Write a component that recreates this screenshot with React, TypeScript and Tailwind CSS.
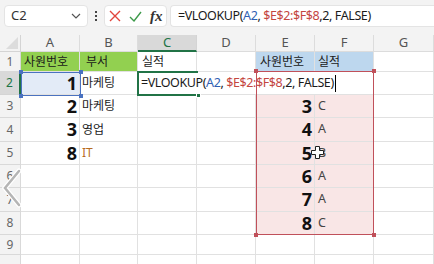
import type { ReactNode } from 'react';

const COLS = ['A', 'B', 'C', 'D', 'E', 'F', 'G'];
const ROWS = [1, 2, 3, 4, 5, 6, 7, 8, 9, 10];

// lookup table E/F
const LOOKUP: Record<number, [string, string]> = {
  3: ['3', 'C'],
  4: ['4', 'A'],
  5: ['5', 'B'],
  6: ['6', 'A'],
  7: ['7', 'A'],
  8: ['8', 'C'],
};

const EMP: Record<number, [string, string]> = {
  2: ['1', '마케팅'],
  3: ['2', '마케팅'],
  4: ['3', '영업'],
  5: ['8', 'IT'],
};

function Formula() {
  return (
    <span className="whitespace-pre text-[12.5px] tracking-[-0.4px]">
      =VLOOKUP(<span className="text-[#2f5fb3]">A2</span>, <span className="text-[#c4463f]">$E$2:$F$8</span>,2, FALSE)
    </span>
  );
}

function Cell({ children, className = '' }: { children?: ReactNode; className?: string }) {
  return (
    <div className={`flex items-center overflow-hidden whitespace-nowrap border-r border-b border-[#e1e1e1] ${className}`}>
      {children}
    </div>
  );
}

function renderRow(r: number) {
  const cells: ReactNode[] = [];
  const active = r === 2;
  cells.push(
    <div
      key={`h${r}`}
      className={`flex items-center justify-center border-b border-r text-[12px] ${
        active
          ? 'border-r-2 border-r-[#217346] border-b-[#d4d4d4] bg-[#d9d9d9] text-[#217346]'
          : 'border-[#d9d9d9] bg-[#f3f3f3] text-[#666]'
      }`}
    >
      {r < 10 ? r : ''}
    </div>
  );

  if (r === 1) {
    cells.push(
      <Cell key="A1" className="bg-[#92d050] pl-[3px] text-[12px] text-[#1a1a1a]">사원번호</Cell>,
      <Cell key="B1" className="bg-[#92d050] pl-[6px] text-[12px] text-[#1a1a1a]">부서</Cell>,
      <Cell key="C1" className="pl-[4px] text-[12px] text-[#1a1a1a]">실적</Cell>,
      <Cell key="D1" />,
      <Cell key="E1" className="bg-[#bdd7ee] pl-[4px] text-[12px] text-[#1a1a1a]">사원번호</Cell>,
      <Cell key="F1" className="bg-[#bdd7ee] pl-[3px] text-[12px] text-[#1a1a1a]">실적</Cell>,
      <Cell key="G1" />
    );
    return cells;
  }

  const emp = EMP[r];
  cells.push(
    <Cell key={`A${r}`} className={`justify-end pr-[2px] text-[18px] font-bold text-[#111] ${r === 2 ? 'bg-[#e3ebf7]' : ''}`}>
      {emp?.[0]}
    </Cell>,
    <Cell key={`B${r}`} className={`pl-[2px] text-[12px] ${emp?.[1] === 'IT' ? 'text-[#b86b1e]' : 'text-[#222]'}`}>
      {emp?.[1]}
    </Cell>
  );

  if (r === 2) {
    cells.push(
      <div key="C2" className="col-span-4 flex items-center whitespace-nowrap border-b border-[#e1e1e1] bg-white pl-[3px] text-[#1a1a1a]">
        <Formula />
        <span className="ml-[1px] inline-block h-[17px] w-px bg-black" />
      </div>,
      <Cell key="G2" />
    );
    return cells;
  }

  const lk = LOOKUP[r];
  cells.push(
    <Cell key={`C${r}`} />,
    <Cell key={`D${r}`} />,
    <Cell key={`E${r}`} className={lk ? 'justify-end bg-[#f9e6e6] pr-[2px] text-[18px] font-bold text-[#111]' : ''}>
      {lk?.[0]}
    </Cell>,
    <Cell key={`F${r}`} className={lk ? 'bg-[#f9e6e6] pl-[3px] text-[12.5px] text-[#444]' : ''}>
      {lk?.[1]}
    </Cell>,
    <Cell key={`G${r}`} />
  );
  return cells;
}

export default function App() {
  return (
    <div className="relative h-[264px] w-[434px] overflow-hidden bg-white font-['Noto_Sans','Noto_Sans_CJK_KR',sans-serif]">
      {/* formula bar */}
      <div className="flex h-[35px] items-start bg-[#f3f3f3] pt-[5px]">
        <div className="ml-[4px] flex h-[22px] w-[84px] items-center justify-between rounded-[4px] border border-[#e4e4e4] bg-white pl-[6px] pr-[6px] text-[13px] text-[#333]">
          <span>C2</span>
          <svg width="10" height="6" viewBox="0 0 10 6">
            <path d="M1 1l4 4 4-4" fill="none" stroke="#555" strokeWidth="1.2" />
          </svg>
        </div>
        <div className="ml-[7px] mt-[6px] flex w-[3px] flex-col gap-[2px]">
          <span className="h-[2px] w-[2px] bg-[#444]" />
          <span className="h-[2px] w-[2px] bg-[#444]" />
          <span className="h-[2px] w-[2px] bg-[#444]" />
        </div>
        <div className="ml-[6px] flex h-[22px] w-[63px] items-center gap-[8px] rounded-[4px] border border-[#e4e4e4] bg-white pl-[4px]">
          <svg width="12" height="12" viewBox="0 0 12 12">
            <path d="M1 1l10 10M11 1L1 11" stroke="#e2453c" strokeWidth="1.4" />
          </svg>
          <svg width="13" height="11" viewBox="0 0 13 11">
            <path d="M1 6l4 4 7-9" fill="none" stroke="#3d9a4a" strokeWidth="1.4" />
          </svg>
          <span className="font-['Liberation_Serif',serif] text-[15px] font-bold italic leading-none text-[#333]">fx</span>
        </div>
        <div className="ml-[3px] flex h-[22px] flex-1 items-center rounded-l-[4px] border border-r-0 border-[#e4e4e4] bg-white pl-[7px] whitespace-nowrap text-[#1a1a1a]">
          <Formula />
        </div>
      </div>

      {/* sheet grid */}
      <div className="relative grid grid-cols-[21px_59px_58px_59px_59px_59px_59px_60px] grid-rows-[17px_20px_23px_23px_24px_23px_23px_24px_23px_20px_20px]">
        <div className="flex items-end justify-end border-r border-b border-[#d4d4d4] bg-[#f3f3f3] p-[2px]">
          <svg width="12" height="12" viewBox="0 0 12 12">
            <path d="M12 0v12H0z" fill="#dcdcdc" />
          </svg>
        </div>
        {COLS.map((c) => (
          <div
            key={c}
            className={`flex items-center justify-center border-r text-[13px] ${
              c === 'C'
                ? 'border-b-2 border-[#d4d4d4] border-b-[#217346] bg-[#d9d9d9] text-[#217346]'
                : 'border-b border-[#dcdcdc] bg-[#f3f3f3] text-[#555]'
            }`}
          >
            {c}
          </div>
        ))}
        {ROWS.map((r) => renderRow(r))}

        {/* A2 reference (blue) */}
        <div className="pointer-events-none absolute left-[21px] top-[37px] h-[24px] w-[60px] border-[1.5px] border-[#4a72c0]">
          <span className="absolute -left-[3px] -top-[3px] h-[4px] w-[4px] bg-[#4a72c0]" />
          <span className="absolute -right-[3px] -top-[3px] h-[4px] w-[4px] bg-[#4a72c0]" />
          <span className="absolute -left-[3px] -bottom-[3px] h-[4px] w-[4px] bg-[#4a72c0]" />
          <span className="absolute -right-[3px] -bottom-[3px] h-[4px] w-[4px] bg-[#4a72c0]" />
        </div>

        {/* active cell C2, edit text runs past its right edge */}
        <div className="pointer-events-none absolute left-[137px] top-[36px] h-[25px] w-[61px] border-2 border-r-0 border-[#217346]">
          <span className="absolute -right-[3px] -bottom-[4px] h-[5px] w-[5px] border border-white bg-[#217346]" />
        </div>

        {/* E2:F8 reference (red) */}
        <div className="pointer-events-none absolute left-[256px] top-[36px] h-[164px] w-[118px] border-[1.5px] border-[#c0505a]">
          <span className="absolute -left-[3px] -top-[3px] h-[4px] w-[4px] bg-[#c0505a]" />
          <span className="absolute -right-[3px] -top-[3px] h-[4px] w-[4px] bg-[#c0505a]" />
          <span className="absolute -left-[3px] -bottom-[3px] h-[4px] w-[4px] bg-[#c0505a]" />
          <span className="absolute -right-[3px] -bottom-[3px] h-[4px] w-[4px] bg-[#c0505a]" />
        </div>

        {/* move cursor */}
        <svg className="pointer-events-none absolute left-[311px] top-[111px]" width="13" height="13" viewBox="0 0 13 13">
          <path d="M4.5 0.5h4v4h4v4h-4v4h-4v-4h-4v-4h4z" fill="#fff" stroke="#222" strokeWidth="1" />
        </svg>
      </div>

      {/* side nav chevron overlay */}
      <svg className="pointer-events-none absolute left-[1px] top-[168px]" width="22" height="40" viewBox="0 0 22 40">
        <path d="M18 3L4 20l14 17" fill="none" stroke="#fff" strokeWidth="5" strokeLinecap="round" />
        <path d="M18 3L4 20l14 17" fill="none" stroke="#b5b5b5" strokeWidth="2.5" strokeLinecap="round" />
      </svg>
    </div>
  );
}
